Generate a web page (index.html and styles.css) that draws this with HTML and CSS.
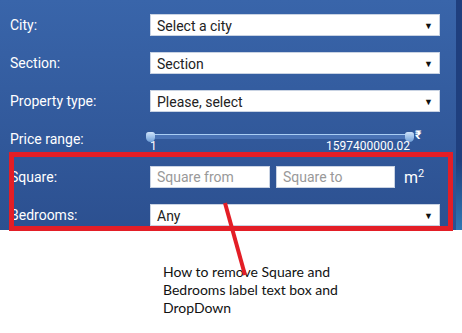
FILE: index.html
```html
<!DOCTYPE html>
<html lang="en">
<head>
    <meta charset="UTF-8">
    <meta name="viewport" content="width=device-width, initial-scale=1.0">
    <title>Search Form</title>
    <link rel="stylesheet" href="styles.css">
</head>
<body>
    <div class="screen">
        <!-- Search panel -->
        <div class="panel">
            <form class="search-form">
                <div class="row">
                    <label>City:</label>
                    <div class="fake-select">Select a city<span class="arrow">&#9660;</span></div>
                </div>
                <div class="row">
                    <label>Section:</label>
                    <div class="fake-select">Section<span class="arrow">&#9660;</span></div>
                </div>
                <div class="row">
                    <label>Property type:</label>
                    <div class="fake-select">Please, select<span class="arrow">&#9660;</span></div>
                </div>
                <div class="row">
                    <label>Price range:</label>
                    <div class="range">
                        <div class="track"></div>
                        <span class="thumb thumb-min"></span>
                        <span class="thumb thumb-max"></span>
                        <span class="range-min">1</span>
                        <span class="range-max">1597400000.02</span>
                        <span class="currency">&#8377;</span>
                    </div>
                </div>
                <div class="row">
                    <label>Square:</label>
                    <div class="square-inputs">
                        <input type="text" class="text-box" placeholder="Square from">
                        <input type="text" class="text-box" placeholder="Square to">
                        <span class="unit">m<sup>2</sup></span>
                    </div>
                </div>
                <div class="row">
                    <label>Bedrooms:</label>
                    <div class="fake-select">Any<span class="arrow">&#9660;</span></div>
                </div>
            </form>
            <div class="edge"></div>
        </div>

        <!-- Annotation -->
        <div class="highlight-box"></div>
        <svg class="pointer" width="462" height="333" viewBox="0 0 462 333">
            <line x1="225" y1="203" x2="245" y2="275" stroke="#e31e26" stroke-width="4"/>
        </svg>
        <p class="note">How to remove Square and<br>Bedrooms label text box and<br>DropDown</p>
    </div>
</body>
</html>
```

FILE: styles.css
```css
/* General Styling */
body {
    margin: 0;
    background: white;
    font-family: Roboto, "Liberation Sans", Arial, sans-serif;
}

.screen {
    position: relative;
    width: 462px;
    height: 333px;
    overflow: hidden;
}

/* Search panel */
.panel {
    display: flex;
    height: 230px;
}

.search-form {
    width: 456px;
    box-sizing: border-box;
    padding: 14px 16px 0 10px;
    display: flex;
    flex-direction: column;
    gap: 16px;
    background: linear-gradient(to bottom, #3965aa, #2c5090);
}

.edge {
    flex: 1;
    background: linear-gradient(to bottom, #1f3f7e 0%, #1f3f7e 70%, #2f78b4 100%);
}

.row {
    display: grid;
    grid-template-columns: 140px 290px;
    height: 22px;
    align-items: center;
}

.row label {
    color: #fff;
    font-size: 14px;
}

.fake-select {
    position: relative;
    height: 22px;
    line-height: 22px;
    box-sizing: border-box;
    padding-left: 6px;
    background: #fff;
    border: 1px solid #c9d3e3;
    color: #222;
    font-size: 14px;
}

.arrow {
    position: absolute;
    right: 6px;
    top: 0;
    font-size: 9px;
    color: #111;
}

/* Price slider */
.range {
    position: relative;
    height: 22px;
}

.track {
    margin: 6px 32px 0 2px;
    height: 4px;
    border-top: 1px solid #a9cdf4;
    background: #4a73b6;
}

.thumb {
    position: absolute;
    top: 4px;
    width: 9px;
    height: 10px;
    background: linear-gradient(to bottom, #cfe4fb, #6f9fd8);
    border-radius: 3px 3px 5px 5px;
}

.thumb-min {
    left: -4px;
}

.thumb-max {
    left: 255px;
}

.range-min, .range-max {
    position: absolute;
    top: 12px;
    color: #fff;
    font-size: 12px;
    line-height: 12px;
}

.range-min {
    left: 0;
}

.range-max {
    left: 176px;
}

.currency {
    position: absolute;
    left: 265px;
    top: 0;
    color: #fff;
    font-size: 12px;
    font-weight: bold;
}

/* Square inputs */
.square-inputs {
    display: flex;
    align-items: center;
    gap: 6px;
}

.text-box {
    width: 120px;
    height: 22px;
    box-sizing: border-box;
    padding: 0 6px;
    border: 1px solid #c9d3e3;
    font-family: inherit;
    font-size: 14px;
    outline: none;
}

.text-box + .text-box {
    width: 119px;
}

.text-box::placeholder {
    color: #999;
}

.unit {
    margin-left: 3px;
    color: #fff;
    font-size: 16px;
}

.unit sup {
    font-size: 11px;
}

/* Annotation */
.highlight-box {
    position: absolute;
    left: 9px;
    top: 152px;
    width: 434px;
    height: 69px;
    border: 5px solid #e31e26;
}

.pointer {
    position: absolute;
    left: 0;
    top: 0;
}

.note {
    margin: 33px 0 0 163px;
    font-family: Lato, "Open Sans", sans-serif;
    font-size: 14px;
    line-height: 18px;
    color: #111;
}
```
